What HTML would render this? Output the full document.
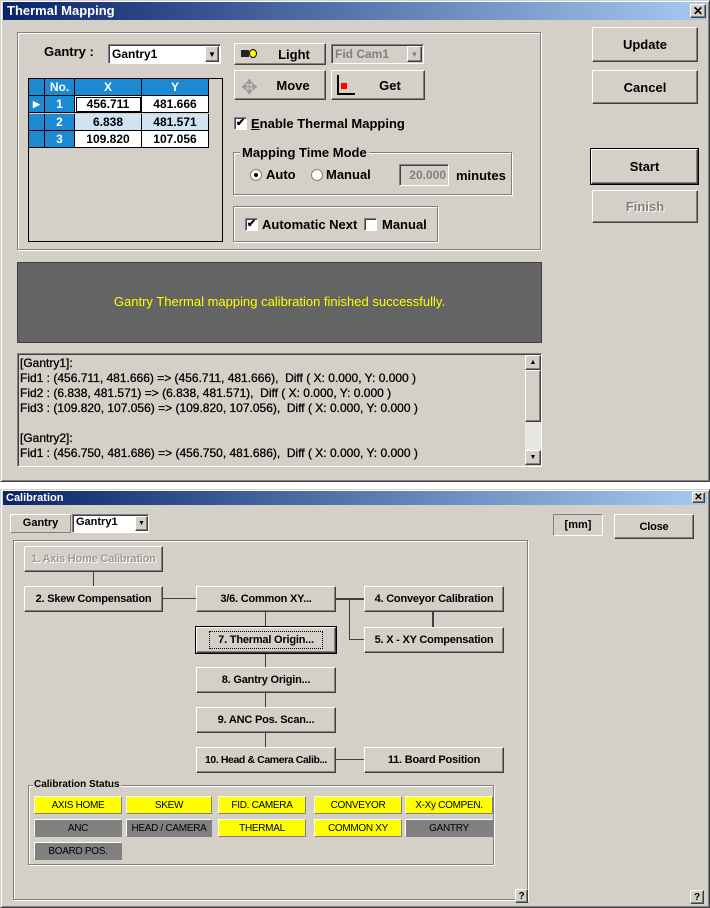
<!DOCTYPE html><html><head><style>
*{box-sizing:border-box;margin:0;padding:0}
body{width:710px;height:908px;background:#fff;position:relative;overflow:hidden;font-family:"Liberation Sans",Arial,sans-serif;font-size:12px;font-weight:bold;color:#000;white-space:nowrap}
.a{position:absolute}
.dlg{background:#d4d0c8;border:1px solid;border-color:#d4d0c8 #404040 #404040 #d4d0c8;box-shadow:inset 1px 1px #fff,inset -1px -1px #808080}
.title{background:linear-gradient(90deg,#0a246a,#a6caf0);color:#fff}
.btn{position:absolute;background:#d4d0c8;border:1px solid;border-color:#fff #404040 #404040 #fff;box-shadow:inset -1px -1px #808080;display:flex;align-items:center;justify-content:center;white-space:nowrap}
.sunk{position:absolute;border:1px solid;border-color:#808080 #fff #fff #808080;box-shadow:inset 1px 1px #404040}
.etch{position:absolute;border:1px solid #808080;box-shadow:1px 1px #fff, inset 1px 1px #fff}
.cb{position:absolute;width:13px;height:13px;background:#fff;border:1px solid;border-color:#808080 #fff #fff #808080;box-shadow:inset 1px 1px #404040;font-size:11px;line-height:10px;text-align:center}
.cell{position:absolute;height:17px;text-align:center;line-height:17px;border-right:1px solid #000;border-bottom:1px solid #000}
.hd{background:#1c8ad2;color:#fff}
.st{position:absolute;height:18px;font-size:10px;font-weight:normal;letter-spacing:-.3px;display:flex;align-items:center;justify-content:center;border:1px solid;border-color:#fff #808080 #808080 #fff}
.y{background:#ffff00}.g{background:#808080}
.ln{position:absolute;background:#404040}
.cbtn{font-size:11px;letter-spacing:-.2px}
</style></head><body>
<div class="a dlg" style="left:0;top:0;width:710px;height:482px"></div>
<div class="a title" style="left:3px;top:2px;width:704px;height:18px;font-size:13px;padding:1px 4px">Thermal Mapping</div>
<div class="btn" style="left:690px;top:4px;width:16px;height:14px;font-size:12px">✕</div>
<div class="etch" style="left:17px;top:32px;width:524px;height:218px"></div>
<div class="a" style="left:44px;top:44px;font-size:13px">Gantry :</div>
<div class="sunk" style="left:108px;top:44px;width:113px;height:20px;background:#fff;padding:2px 3px;font-size:12px">Gantry1</div>
<div class="btn" style="left:205px;top:46px;width:14px;height:16px;font-size:8px">▼</div>
<div class="a" style="left:28px;top:78px;width:195px;height:164px;border:1px solid #000;background:#d4d0c8"></div>
<div class="cell hd" style="left:29px;top:79px;width:16px"></div>
<div class="cell hd" style="left:45px;top:79px;width:30px">No.</div>
<div class="cell hd" style="left:75px;top:79px;width:67px">X</div>
<div class="cell hd" style="left:142px;top:79px;width:67px">Y</div>
<div class="cell hd" style="left:29px;top:96px;width:16px;font-size:9px">▶</div>
<div class="cell hd" style="left:45px;top:96px;width:30px">1</div>
<div class="cell" style="left:75px;top:96px;width:67px;background:#fff;outline:1px solid #000;outline-offset:-2px">456.711</div>
<div class="cell" style="left:142px;top:96px;width:67px;background:#fff">481.666</div>
<div class="cell hd" style="left:29px;top:114px;width:16px"></div>
<div class="cell hd" style="left:45px;top:114px;width:30px">2</div>
<div class="cell" style="left:75px;top:114px;width:67px;background:#cfe3f2">6.838</div>
<div class="cell" style="left:142px;top:114px;width:67px;background:#cfe3f2">481.571</div>
<div class="cell hd" style="left:29px;top:131px;width:16px"></div>
<div class="cell hd" style="left:45px;top:131px;width:30px">3</div>
<div class="cell" style="left:75px;top:131px;width:67px;background:#fff">109.820</div>
<div class="cell" style="left:142px;top:131px;width:67px;background:#fff">107.056</div>
<div class="btn" style="left:234px;top:43px;width:92px;height:22px;font-size:13px;padding-left:28px"><span class="a" style="left:6px;top:6px;width:8px;height:7px;background:#222"></span><span class="a" style="left:14px;top:5px;width:8px;height:9px;background:#ff0;border:1px solid #000;border-radius:50%"></span>Light</div>
<div class="sunk" style="left:331px;top:44px;width:93px;height:20px;color:#808080;padding:2px 3px;font-size:12px">Fid Cam1</div>
<div class="btn" style="left:407px;top:46px;width:15px;height:16px;font-size:8px;color:#808080">▼</div>
<div class="btn" style="left:234px;top:70px;width:92px;height:30px;font-size:13px;padding-left:26px"><span class="a" style="left:6px;top:4px;color:#999;font-size:20px;font-weight:normal">✥</span>Move</div>
<div class="btn" style="left:331px;top:70px;width:94px;height:30px;font-size:13px;padding-left:24px"><span class="a" style="left:5px;top:4px;width:18px;height:20px;border-left:2px solid #000;border-bottom:2px solid #000"></span><span class="a" style="left:9px;top:12px;width:6px;height:6px;background:#f00"></span>Get</div>
<div class="cb" style="left:234px;top:117px">✔</div>
<div class="a" style="left:251px;top:116px;font-size:13px"><u>E</u>nable Thermal Mapping</div>
<div class="etch" style="left:233px;top:152px;width:279px;height:43px"></div>
<div class="a" style="left:240px;top:145px;background:#d4d0c8;padding:0 2px;font-size:13px">Mapping Time Mode</div>
<div class="a" style="left:250px;top:169px;width:12px;height:12px;border-radius:50%;background:#fff;border:1px solid #808080"><div class="a" style="left:3px;top:3px;width:4px;height:4px;background:#000;border-radius:50%"></div></div>
<div class="a" style="left:266px;top:167px;font-size:13px">Auto</div>
<div class="a" style="left:311px;top:169px;width:12px;height:12px;border-radius:50%;background:#fff;border:1px solid #808080"></div>
<div class="a" style="left:326px;top:167px;font-size:13px">Manual</div>
<div class="sunk" style="left:399px;top:164px;width:50px;height:22px;color:#808080;padding:3px 2px;font-size:12px;text-align:right">20.000</div>
<div class="a" style="left:456px;top:168px;font-size:13px">minutes</div>
<div class="etch" style="left:233px;top:206px;width:205px;height:36px"></div>
<div class="cb" style="left:245px;top:218px">✔</div>
<div class="a" style="left:262px;top:217px;font-size:13px">Automatic Next</div>
<div class="cb" style="left:364px;top:218px"></div>
<div class="a" style="left:382px;top:217px;font-size:13px">Manual</div>
<div class="btn" style="left:592px;top:27px;width:106px;height:35px;font-size:13px">Update</div>
<div class="btn" style="left:592px;top:70px;width:106px;height:34px;font-size:13px">Cancel</div>
<div class="btn" style="left:591px;top:149px;width:107px;height:35px;font-size:13px;outline:1px solid #000">Start</div>
<div class="btn" style="left:592px;top:190px;width:106px;height:33px;font-size:13px;color:#808080;text-shadow:1px 1px #fff">Finish</div>
<div class="a" style="left:17px;top:262px;width:525px;height:81px;background:#646464;border:1px solid #404040;color:#ffff00;font-size:13px;font-weight:normal;text-align:center;line-height:78px">Gantry Thermal mapping calibration finished successfully.</div>
<div class="sunk" style="left:17px;top:353px;width:525px;height:114px;background:#d4d0c8"></div>
<div class="a" style="left:20px;top:356px;font-size:12px;line-height:15px;font-weight:normal;-webkit-text-stroke:.3px #000">[Gantry1]:<br>Fid1 : (456.711, 481.666) =&gt; (456.711, 481.666),&nbsp; Diff ( X: 0.000, Y: 0.000 )<br>Fid2 : (6.838, 481.571) =&gt; (6.838, 481.571),&nbsp; Diff ( X: 0.000, Y: 0.000 )<br>Fid3 : (109.820, 107.056) =&gt; (109.820, 107.056),&nbsp; Diff ( X: 0.000, Y: 0.000 )<br><br>[Gantry2]:<br>Fid1 : (456.750, 481.686) =&gt; (456.750, 481.686),&nbsp; Diff ( X: 0.000, Y: 0.000 )</div>
<div class="a" style="left:525px;top:355px;width:16px;height:110px;background:#e8e6e0"></div>
<div class="btn" style="left:525px;top:355px;width:16px;height:15px;font-size:7px">▲</div>
<div class="btn" style="left:525px;top:370px;width:16px;height:52px"></div>
<div class="btn" style="left:525px;top:450px;width:16px;height:15px;font-size:7px">▼</div>
<div class="a dlg" style="left:0;top:489px;width:710px;height:419px"></div>
<div class="a title" style="left:3px;top:491px;width:704px;height:14px;font-size:11px;padding:0 3px;line-height:14px">Calibration</div>
<div class="btn" style="left:692px;top:492px;width:13px;height:11px;font-size:10px">✕</div>
<div class="a" style="left:10px;top:514px;width:61px;height:19px;border:1px solid;border-color:#fff #808080 #808080 #fff;font-size:11px;text-align:center;line-height:17px">Gantry</div>
<div class="sunk" style="left:72px;top:514px;width:77px;height:19px;background:#fff;font-size:11px;padding:1px 3px">Gantry1</div>
<div class="btn" style="left:135px;top:516px;width:13px;height:15px;font-size:7px">▼</div>
<div class="a" style="left:553px;top:514px;width:50px;height:22px;border:1px solid;border-color:#808080 #fff #fff #808080;font-size:11px;text-align:center;line-height:20px">[mm]</div>
<div class="btn cbtn" style="left:614px;top:514px;width:80px;height:25px">Close</div>
<div class="etch" style="left:13px;top:540px;width:515px;height:360px"></div>
<div class="ln" style="left:93px;top:571px;width:1px;height:16px"></div>
<div class="ln" style="left:162px;top:598px;width:35px;height:1px"></div>
<div class="ln" style="left:335px;top:598px;width:30px;height:2px"></div>
<div class="ln" style="left:349px;top:598px;width:1px;height:42px"></div>
<div class="ln" style="left:349px;top:639px;width:16px;height:1px"></div>
<div class="ln" style="left:432px;top:611px;width:2px;height:17px"></div>
<div class="ln" style="left:265px;top:611px;width:1px;height:137px"></div>
<div class="ln" style="left:335px;top:759px;width:30px;height:1px"></div>
<div class="btn cbtn" style="left:24px;top:546px;width:139px;height:26px;color:#999;text-shadow:1px 1px #fff">1. Axis Home Calibration</div>
<div class="btn cbtn" style="left:24px;top:586px;width:139px;height:26px">2. Skew Compensation</div>
<div class="btn cbtn" style="left:196px;top:586px;width:140px;height:26px">3/6. Common XY...</div>
<div class="btn cbtn" style="left:196px;top:627px;width:140px;height:26px;outline:1px solid #000"><span style="border:1px dotted #000;padding:2px 8px">7. Thermal Origin...</span></div>
<div class="btn cbtn" style="left:196px;top:667px;width:140px;height:26px">8. Gantry Origin...</div>
<div class="btn cbtn" style="left:196px;top:707px;width:140px;height:26px">9. ANC Pos. Scan...</div>
<div class="btn cbtn" style="left:196px;top:747px;width:140px;height:26px;font-size:10.5px;letter-spacing:-.4px">10. Head &amp; Camera Calib...</div>
<div class="btn cbtn" style="left:364px;top:586px;width:140px;height:26px">4. Conveyor Calibration</div>
<div class="btn cbtn" style="left:364px;top:627px;width:140px;height:26px">5. X - XY Compensation</div>
<div class="btn cbtn" style="left:364px;top:747px;width:140px;height:26px">11. Board Position</div>
<div class="etch" style="left:28px;top:785px;width:466px;height:80px"></div>
<div class="a" style="left:33px;top:779px;background:#d4d0c8;padding:0 1px;font-size:10px">Calibration Status</div>
<div class="st y" style="left:34px;top:796px;width:88px">AXIS HOME</div>
<div class="st y" style="left:126px;top:796px;width:86px">SKEW</div>
<div class="st y" style="left:218px;top:796px;width:88px">FID. CAMERA</div>
<div class="st y" style="left:314px;top:796px;width:88px">CONVEYOR</div>
<div class="st y" style="left:405px;top:796px;width:88px">X-Xy COMPEN.</div>
<div class="st g" style="left:34px;top:819px;width:88px">ANC</div>
<div class="st g" style="left:126px;top:819px;width:86px">HEAD / CAMERA</div>
<div class="st y" style="left:218px;top:819px;width:88px">THERMAL</div>
<div class="st y" style="left:314px;top:819px;width:88px">COMMON XY</div>
<div class="st g" style="left:405px;top:819px;width:88px">GANTRY</div>
<div class="st g" style="left:34px;top:842px;width:88px">BOARD POS.</div>
<div class="btn" style="left:515px;top:889px;width:13px;height:14px;font-size:10px">?</div>
<div class="btn" style="left:690px;top:890px;width:14px;height:14px;font-size:10px">?</div>
</body></html>
